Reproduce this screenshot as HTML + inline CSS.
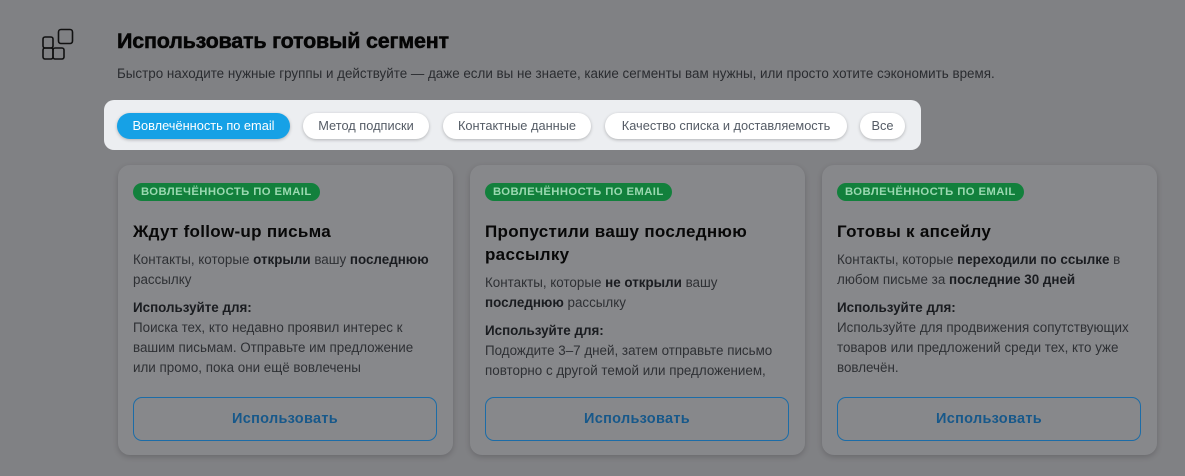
<!DOCTYPE html>
<html><head><meta charset="utf-8"><style>
*{box-sizing:border-box;margin:0;padding:0}
body{width:1185px;height:476px;background:#808184;font-family:"Liberation Sans","DejaVu Sans",sans-serif;position:relative;overflow:hidden;color:#111}
.icon{position:absolute;left:40px;top:27px}
h1{position:absolute;left:117px;top:29px;font-size:21.5px;font-weight:bold;color:#050505;letter-spacing:-0.2px;-webkit-text-stroke:0.5px #050505}
.sub{position:absolute;left:117px;top:66px;font-size:13.4px;color:#2a2c30}
.bar{position:absolute;left:104px;top:100px;width:817px;height:50px;background:#eceef1;border-radius:10px}
.pill{position:absolute;top:13px;height:26px;border-radius:13px;background:#fff;font-size:12.8px;color:#555c66;line-height:26px;text-align:center;box-shadow:0 1px 3px rgba(0,0,0,.25)}
.pill.a{background:#16a1e6;color:#fff}
.card{position:absolute;top:165px;width:335px;height:290px;background:#87888b;border-radius:12px;box-shadow:0 2px 6px rgba(0,0,0,.18)}
.badge{position:absolute;left:15px;top:18px;height:18px;border-radius:9px;background:#12803c;color:#9ad8b0;font-size:11.3px;font-weight:bold;padding:0 8px;line-height:18px;letter-spacing:.4px}
.t{position:absolute;left:15px;top:55px;width:310px;font-size:17px;font-weight:bold;line-height:23px;color:#080808;letter-spacing:.3px}
.d{position:absolute;left:15px;width:310px;font-size:13.4px;line-height:20px;color:#2e3034}
.d b{color:#1a1c20}
.btn{position:absolute;left:15px;top:232px;width:304px;height:44px;border:1.5px solid #1c6ca7;border-radius:9px;text-align:center;line-height:43px;font-size:14.5px;font-weight:bold;color:#17588a;letter-spacing:.3px}
</style></head><body>
<svg class="icon" width="36" height="36" viewBox="0 0 36 36" fill="none" stroke="#111" stroke-width="1.6"><rect x="3" y="10" width="10" height="11" rx="2"/><rect x="3" y="21" width="10" height="11" rx="2"/><rect x="13" y="21" width="11" height="11" rx="2"/><rect x="18.5" y="2.5" width="14" height="14" rx="2.5"/></svg>
<h1>Использовать готовый сегмент</h1>
<div class="sub">Быстро находите нужные группы и действуйте — даже если вы не знаете, какие сегменты вам нужны, или просто хотите сэкономить время.</div>
<div class="bar">
<div class="pill a" style="left:13px;width:173px">Вовлечённость по email</div>
<div class="pill" style="left:199px;width:126px">Метод подписки</div>
<div class="pill" style="left:339px;width:148px">Контактные данные</div>
<div class="pill" style="left:501px;width:242px">Качество списка и доставляемость</div>
<div class="pill" style="left:756px;width:45px">Все</div>
</div>
<div class="card" style="left:118px">
<div class="badge">ВОВЛЕЧЁННОСТЬ ПО EMAIL</div>
<div class="t">Ждут follow-up письма</div>
<div class="d" style="top:85px">Контакты, которые <b>открыли</b> вашу <b>последнюю</b><br>рассылку</div>
<div class="d" style="top:133px"><b>Используйте для:</b><br>Поиска тех, кто недавно проявил интерес к<br>вашим письмам. Отправьте им предложение<br>или промо, пока они ещё вовлечены</div>
<div class="btn">Использовать</div>
</div>
<div class="card" style="left:470px">
<div class="badge">ВОВЛЕЧЁННОСТЬ ПО EMAIL</div>
<div class="t">Пропустили вашу последнюю<br>рассылку</div>
<div class="d" style="top:108px">Контакты, которые <b>не открыли</b> вашу<br><b>последнюю</b> рассылку</div>
<div class="d" style="top:156px;height:60px;overflow:hidden"><b>Используйте для:</b><br>Подождите 3–7 дней, затем отправьте письмо<br>повторно с другой темой или предложением,</div>
<div class="btn">Использовать</div>
</div>
<div class="card" style="left:822px">
<div class="badge">ВОВЛЕЧЁННОСТЬ ПО EMAIL</div>
<div class="t">Готовы к апсейлу</div>
<div class="d" style="top:85px">Контакты, которые <b>переходили по ссылке</b> в<br>любом письме за <b>последние 30 дней</b></div>
<div class="d" style="top:133px"><b>Используйте для:</b><br>Используйте для продвижения сопутствующих<br>товаров или предложений среди тех, кто уже<br>вовлечён.</div>
<div class="btn">Использовать</div>
</div>
</body></html>
